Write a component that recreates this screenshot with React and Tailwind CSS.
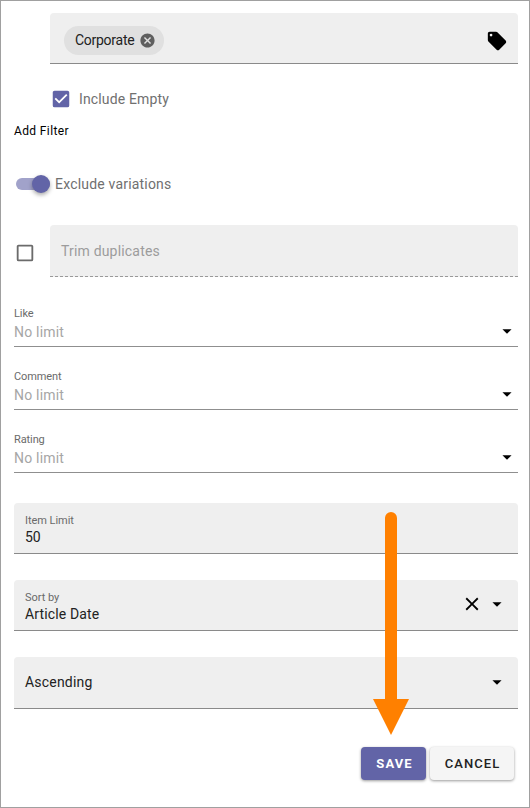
function Caret() {
  return (
    <svg className="mb-[2px] block h-[22px] w-[22px] shrink-0" viewBox="0 0 24 24">
      <path d="M7,10L12,15L17,10H7Z" />
    </svg>
  );
}

function LimitSelect({ label }) {
  return (
    <div className="mt-[21px] flex h-[42px] items-end border-b border-[#8f8f8f]">
      <div className="h-full flex-1">
        <div className="h-[17px] text-[11px] leading-[17px] tracking-[-0.1px] text-[#6a6a6a]">{label}</div>
        <div className="h-[20px] text-[14px] leading-[20px] tracking-[0.2px] text-[#a6a6a6]">No limit</div>
      </div>
      <div className="mb-[2px]">
        <Caret />
      </div>
    </div>
  );
}

export default function App() {
  return (
    <div
      className="relative h-[808px] w-[530px] overflow-hidden border border-[#a0a0a0] bg-white pt-[12px] pr-[11px] pl-[13px] text-[14px] text-[#222]"
      style={{ fontFamily: 'Roboto, sans-serif' }}
    >
      <div className="ml-9 flex h-[51px] items-center justify-between rounded-t border-b border-[#8a8a8a] bg-[#efefef] pr-[10px] pl-[14px]">
        <div className="mt-[5px] flex h-[29px] w-[100px] items-center rounded-full bg-[#e0e0e0] pl-[11px]">
          <span className="w-[64px] tracking-[-0.27px]">Corporate</span>
          <svg className="h-[17px] w-[17px]" viewBox="0 0 24 24" fill="#5f5f5f">
            <path d="M12,2C17.53,2 22,6.47 22,12C22,17.53 17.53,22 12,22C6.47,22 2,17.53 2,12C2,6.47 6.47,2 12,2M15.59,7L12,10.59L8.41,7L7,8.41L10.59,12L7,15.59L8.41,17L12,13.41L15.59,17L17,15.59L13.41,12L17,8.41L15.59,7Z" />
          </svg>
        </div>
        <svg className="mt-[5px] h-[22px] w-[22px]" viewBox="0 0 24 24">
          <path d="M5.5,7A1.5,1.5 0 0,1 4,5.5A1.5,1.5 0 0,1 5.5,4A1.5,1.5 0 0,1 7,5.5A1.5,1.5 0 0,1 5.5,7M21.41,11.58L12.41,2.58C12.05,2.22 11.55,2 11,2H4C2.89,2 2,2.89 2,4V11C2,11.55 2.22,12.05 2.59,12.41L11.58,21.41C11.95,21.77 12.45,22 13,22C13.55,22 14.05,21.77 14.41,21.41L21.41,14.41C21.78,14.05 22,13.55 22,13C22,12.44 21.77,11.94 21.41,11.58Z" />
        </svg>
      </div>

      <div className="mt-[23px] ml-9 flex h-6 items-center">
        <svg className="h-[22px] w-[22px]" viewBox="0 0 24 24" fill="#6264a7">
          <path d="M10,17L5,12L6.41,10.58L10,14.17L17.59,6.58L19,8M19,3H5C3.89,3 3,3.89 3,5V19A2,2 0 0,0 5,21H19A2,2 0 0,0 21,19V5C21,3.89 20.1,3 19,3Z" />
        </svg>
        <span className="ml-[7px] tracking-[0.15px] text-[#707070]">Include Empty</span>
      </div>

      <div className="mt-[10px] h-5 text-[12px] leading-5 tracking-[0.38px] text-black">Add Filter</div>

      <div className="mt-[31px] flex h-6 items-center pl-[2px]">
        <div className="flex h-3 w-[34px] items-center justify-end rounded-full bg-[#a1a2ca]">
          <div className="h-[18px] w-[18px] shrink-0 rounded-full bg-[#6264a7] shadow-[0_2px_4px_rgba(0,0,0,0.35)]" />
        </div>
        <span className="ml-[5px] tracking-[0.19px] text-[#707070]">Exclude variations</span>
      </div>

      <div className="mt-[29px] flex h-[52px] items-center">
        <svg className="mt-[4px] h-[22px] w-[22px] shrink-0" viewBox="0 0 24 24" fill="#6b6b6b">
          <path d="M19,3H5C3.89,3 3,3.89 3,5V19A2,2 0 0,0 5,21H19A2,2 0 0,0 21,19V5C21,3.89 20.1,3 19,3M19,5V19H5V5H19Z" />
        </svg>
        <div className="ml-[14px] flex h-[52px] flex-1 items-center rounded-t border-b border-dashed border-[#999] bg-[#efefef] pt-[2px] pl-[11px] tracking-[0.18px] text-[#9c9c9c]">
          Trim duplicates
        </div>
      </div>

      <div className="pt-[7px]">
        <LimitSelect label="Like" />
        <LimitSelect label="Comment" />
        <LimitSelect label="Rating" />
      </div>

      <div className="mt-[30px] h-[51px] rounded-t border-b border-[#8a8a8a] bg-[#efefef] pt-[9px] pl-[11px]">
        <div className="h-[16px] text-[11px] leading-[17px] tracking-[-0.05px] text-[#6a6a6a]">Item Limit</div>
        <div className="h-[18px] leading-[18px]">50</div>
      </div>

      <div className="mt-[26px] flex h-[51px] items-center rounded-t border-b border-[#8a8a8a] bg-[#efefef] pr-[10px] pl-[11px]">
        <div className="h-full flex-1 pt-[9px]">
          <div className="h-[16px] text-[11px] leading-[17px] tracking-[-0.05px] text-[#6a6a6a]">Sort by</div>
          <div className="h-[18px] leading-[18px] tracking-[0.14px]">Article Date</div>
        </div>
        <svg className="mr-[3px] mb-[2px] h-[22px] w-[22px]" viewBox="0 0 24 24">
          <path d="M19,6.41L17.59,5L12,10.59L6.41,5L5,6.41L10.59,12L5,17.59L6.41,19L12,13.41L17.59,19L19,17.59L13.41,12L19,6.41Z" />
        </svg>
        <Caret />
      </div>

      <div className="mt-[26px] flex h-[52px] items-center justify-between rounded-t border-b border-[#8a8a8a] bg-[#efefef] pr-[10px] pl-[11px]">
        <span className="tracking-[0.2px]">Ascending</span>
        <Caret />
      </div>

      <div className="mt-[38px] mr-1 flex justify-end gap-1 text-[13px]">
        <button className="h-[33px] w-[65px] rounded bg-[#6264a7] pl-[2px] font-bold tracking-[1.1px] text-white shadow-[0_1px_3px_rgba(0,0,0,0.4)]">
          SAVE
        </button>
        <button className="h-[33px] w-[84px] rounded bg-[#f5f5f5] pl-[1px] font-medium tracking-[1.05px] shadow-[0_1px_3px_rgba(0,0,0,0.4)]">
          CANCEL
        </button>
      </div>

      <svg className="absolute top-[511px] left-[372px] h-[223px] w-[36px]" viewBox="0 0 36 223" fill="#ff8000">
        <path d="M12 6a6 6 0 0 1 12 0V187H36L18 223L0 187H12Z" />
      </svg>
    </div>
  );
}
